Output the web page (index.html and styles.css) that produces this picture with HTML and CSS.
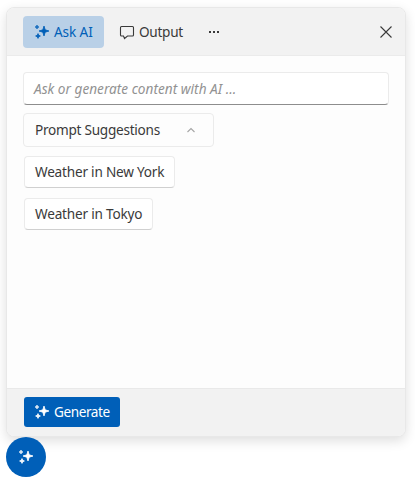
FILE: index.html
```html
<!DOCTYPE html>
<html lang="en">
<head>
<meta charset="utf-8">
<title>AI Prompt</title>
<link rel="stylesheet" href="styles.css">
</head>
<body>
<svg class="defs" width="0" height="0">
  <symbol id="sparkles" viewBox="0 0 16 16">
    <path d="M10 2L11.200 5.800L15 7L11.200 8.200L10 12L8.800 8.200L5 7L8.800 5.800Z" stroke="currentColor" stroke-width=".8" stroke-linejoin="round"/>
    <path d="M3 1L3.600 2.400L5 3L3.600 3.600L3 5L2.400 3.600L1 3L2.400 2.400Z" stroke="currentColor" stroke-width=".6" stroke-linejoin="round"/>
    <path d="M4 9.600L4.700 11.300L6.400 12L4.700 12.700L4 14.400L3.300 12.700L1.600 12L3.300 11.300Z" stroke="currentColor" stroke-width=".8" stroke-linejoin="round"/>
  </symbol>
</svg>
<main class="panel">
  <header class="toolbar">
    <button class="tab tab-active"><svg class="icon"><use href="#sparkles"/></svg><span class="label-ask">Ask AI</span></button>
    <button class="tab tab-output">
      <svg class="icon" viewBox="0 0 16 16"><path class="line" d="M2.500 2.500H13.500Q14.500 2.500 14.500 3.500V11Q14.500 12 13.500 12H8.500L5.500 14.500L4.500 12H2.500Q1.500 12 1.500 11V3.500Q1.500 2.500 2.500 2.500Z"/></svg>
      <span class="label-output">Output</span>
    </button>
    <button class="more" aria-label="More"><svg width="12" height="4"><path d="M1 1h2v2H1zM5 1h2v2H5zM9 1h2v2H9z"/></svg></button>
    <button class="close" aria-label="Close"><svg width="12" height="12"><path class="line" d="M.5.5l11 11M11.500.5l-11 11"/></svg></button>
  </header>
  <section class="content">
    <div class="prompt"><span class="label-placeholder">Ask or generate content with AI ...</span></div>
    <button class="expander"><span class="label-suggestions">Prompt Suggestions</span><svg width="10" height="6"><path class="line chevron" d="M1.500 5l3.500-3.500 3.500 3.500"/></svg></button>
    <button class="suggestion york"><span class="label-york">Weather in New York</span></button>
    <button class="suggestion tokyo"><span class="label-tokyo">Weather in Tokyo</span></button>
  </section>
  <footer class="actions">
    <button class="generate"><svg class="icon"><use href="#sparkles"/></svg><span class="label-generate">Generate</span></button>
  </footer>
</main>
<button class="fab" aria-label="Open AI prompt"><svg class="icon"><use href="#sparkles"/></svg></button>
</body>
</html>
```
FILE: styles.css
```css
* { box-sizing: border-box; }
body {
  margin: 0;
  height: 486px;
  overflow: hidden;
  padding: 7px 0 0 6px;
  background: #fff;
  color: #3a3a3a;
  font: 13.6px/20px "Noto Sans", "Open Sans", sans-serif;
}
.defs { position: absolute; }
svg { display: block; flex: none; fill: currentColor; overflow: visible; }
button {
  display: flex;
  align-items: center;
  margin: 0;
  padding: 0;
  border: 0;
  background: none;
  color: inherit;
  font: inherit;
  white-space: nowrap;
}
.icon { width: 16px; height: 16px; }
.line { fill: none; stroke: currentColor; stroke-width: 1.1; }
.label-ask { letter-spacing: -.1px; }
.label-output { letter-spacing: -.28px; }
.label-placeholder { letter-spacing: .02px; }
.label-suggestions { letter-spacing: -.26px; }
.label-york { letter-spacing: -.21px; }
.label-tokyo { letter-spacing: -.2px; }
.label-generate { letter-spacing: -.43px; }
.panel {
  display: flex;
  flex-direction: column;
  width: 400px;
  height: 430px;
  border: 1px solid #e8e8e8;
  border-radius: 8px;
  background: #fdfdfd;
  overflow: hidden;
  box-shadow: 0 4px 12px rgba(0, 0, 0, .13);
}
.toolbar {
  display: flex;
  align-items: center;
  height: 48px;
  padding: 0 13px 0 16px;
  background: #f2f2f2;
  border-bottom: 1px solid #ebebeb;
}
.tab { height: 32px; gap: 4px; border-radius: 4px; }
.tab-active { width: 81px; padding-left: 11px; background: #b9d0e7; color: #005fb8; }
.tab-output { width: 87px; margin-left: 4px; padding-left: 11px; }
.more { width: 32px; height: 32px; justify-content: center; margin-left: 3px; }
.close { width: 12px; height: 12px; margin-left: auto; }
.content { flex: 1; padding: 16px; }
.prompt {
  display: flex;
  align-items: center;
  height: 33px;
  padding-left: 10px;
  border: 1px solid #ebebeb;
  border-bottom-color: #8d8d8d;
  border-radius: 4px;
  background: #fff;
  color: #929292;
  font-style: italic;
}
.expander {
  width: 191px;
  height: 34px;
  margin-top: 8px;
  padding: 0 17px 0 11px;
  justify-content: space-between;
  border: 1px solid #ebebeb;
  border-radius: 4px;
}
.chevron { color: #a5a5a5; }
.suggestion {
  height: 32px;
  margin: 9px 0 0 1px;
  padding-left: 10px;
  border: 1px solid #ebebeb;
  border-bottom-color: #d0d0d0;
  border-radius: 4px;
  background: #fff;
}
.york { width: 151px; }
.tokyo { width: 129px; margin-top: 10px; }
.actions {
  display: flex;
  align-items: center;
  height: 48px;
  padding: 0 0 1px 17px;
  background: #f2f2f2;
  border-top: 1px solid #e9e9e9;
}
.generate {
  width: 96px;
  height: 30px;
  padding-left: 10px;
  gap: 4px;
  border-radius: 3px;
  background: #005fb8;
  color: #fff;
}
.fab {
  position: relative;
  width: 40px;
  height: 40px;
  justify-content: center;
  border-radius: 50%;
  background: #005fb8;
  color: #fff;
}
```
